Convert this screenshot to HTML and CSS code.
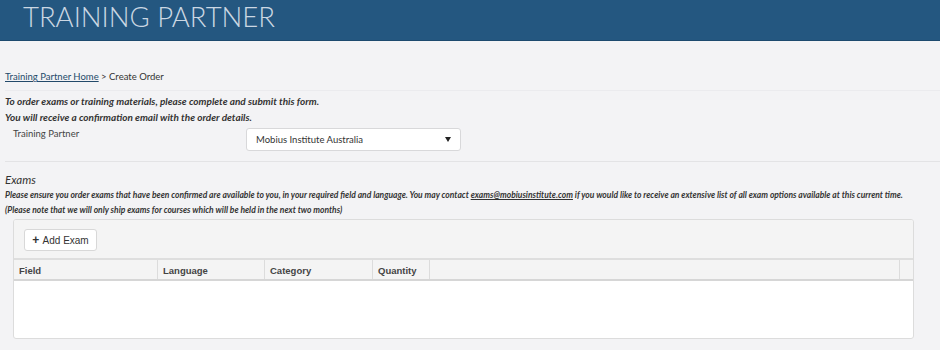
FILE: index.html
```
<!doctype html>
<html>

<head>
    <meta charset="UTF-8">
    <title>Training Partner - Create Order</title>
    <link rel="stylesheet" href="styles.css">
</head>

<body>
    <header class="top">
        <h1>TRAINING PARTNER</h1>
    </header>
    <div class="page">
        <div class="crumbs"><a href="#">Training Partner Home</a> &gt; Create Order</div>
        <div class="intro">
            <p>To order exams or training materials, please complete and submit this form.</p>
            <p>You will receive a confirmation email with the order details.</p>
        </div>
        <div class="form-row">
            <label>Training Partner</label>
            <div class="select">
                <span>Mobius Institute Australia</span>
                <span class="caret"></span>
            </div>
        </div>
        <section class="exams">
            <h2>Exams</h2>
            <p>Please ensure you order exams that have been confirmed are available to you, in your required field and language. You may contact <a href="#">exams@mobiusinstitute.com</a> if you would like to receive an extensive list of all exam options available at this current time.</p>
            <p>(Please note that we will only ship exams for courses which will be held in the next two months)</p>
            <div class="grid">
                <div class="toolbar">
                    <button><b>+</b> Add Exam</button>
                </div>
                <div class="grid-head">
                    <div class="col c1">Field</div>
                    <div class="col c2">Language</div>
                    <div class="col c3">Category</div>
                    <div class="col c4">Quantity</div>
                    <div class="col c5"></div>
                    <div class="gutter"></div>
                </div>
                <div class="grid-body"></div>
            </div>
        </section>
    </div>
</body>

</html>
```

FILE: styles.css
```
body {
    margin: 0;
    padding: 0;
    background-color: #f3f3f5;
    font-family: Lato, "Open Sans", sans-serif;
    color: #333;
}
* {
    box-sizing: border-box;
}
p {
    margin: 0;
}

/** Bandeau du haut */
.top {
    height: 41px;
    background-color: #245780;
    border-bottom: 1px solid #1d4a6e;
    padding: 1px 0 0 23px;
}
.top h1 {
    margin: 0;
    font-weight: 300;
    font-size: 27.5px;
    line-height: 32px;
    color: #cbd7e3;
}

.page {
    padding: 0 0 0 5px;
}

.crumbs {
    margin-top: 29px;
    font-size: 9.5px;
    line-height: 14px;
    padding-bottom: 6px;
    border-bottom: 1px solid #ebebee;
    color: #333;
}
.crumbs a {
    color: #234a6a;
}

.intro {
    font-size: 10px;
    font-weight: bold;
    font-style: italic;
    line-height: 16px;
    padding-top: 2px;
    color: #333;
}

.form-row {
    display: flex;
    align-items: flex-start;
    padding: 3px 0 10px 8px;
    border-bottom: 1px solid #e3e3e5;
}
.form-row label {
    width: 233px;
    font-size: 9.5px;
    line-height: 12px;
    color: #444;
}
.select {
    width: 215px;
    height: 23px;
    background: #fff;
    border: 1px solid #d8d8da;
    border-radius: 3px;
    display: flex;
    align-items: center;
    justify-content: space-between;
    padding: 0 9px 0 9px;
    font-size: 9.5px;
    color: #333;
}
.caret {
    width: 0;
    height: 0;
    border-left: 3.5px solid transparent;
    border-right: 3.5px solid transparent;
    border-top: 5px solid #222;
}

/** Zone des examens */
.exams h2 {
    margin: 10px 0 0 0;
    font-size: 11.5px;
    font-weight: normal;
    font-style: italic;
    line-height: 16px;
}
.exams p {
    font-size: 8.5px;
    font-weight: bold;
    font-style: italic;
    line-height: 15px;
    color: #333;
    white-space: nowrap;
}
.exams p a {
    color: #333;
}

.grid {
    margin: 1px 26px 0 8px;
    border: 1px solid #dcdcdc;
    border-radius: 3px;
    background: #fff;
    overflow: hidden;
}
.toolbar {
    height: 40px;
    background: #f4f4f4;
    border-bottom: 2px solid #dedede;
    padding: 8px 0 0 10px;
}
.toolbar button {
    height: 22px;
    width: 73px;
    background: #fff;
    border: 1px solid #d8d8d8;
    border-radius: 3px;
    font-family: "Liberation Sans", Arial, sans-serif;
    font-size: 10px;
    color: #333;
    padding: 0;
}
.toolbar button b {
    font-size: 12px;
    margin-right: 1px;
}
.grid-head {
    display: flex;
    height: 21px;
    background: #f4f4f4;
    border-bottom: 2px solid #d6d6d6;
}
.col {
    font-family: "Liberation Sans", Arial, sans-serif;
    font-size: 9.5px;
    font-weight: bold;
    color: #444;
    padding: 5px 0 0 5px;
    border-right: 1px solid #dcdcdc;
}
.c1 { width: 144px; }
.c2 { width: 107px; }
.c3 { width: 108px; }
.c4 { width: 57px; }
.c5 { flex: 1; }
.gutter {
    width: 13px;
}
.grid-body {
    height: 57px;
}
```
